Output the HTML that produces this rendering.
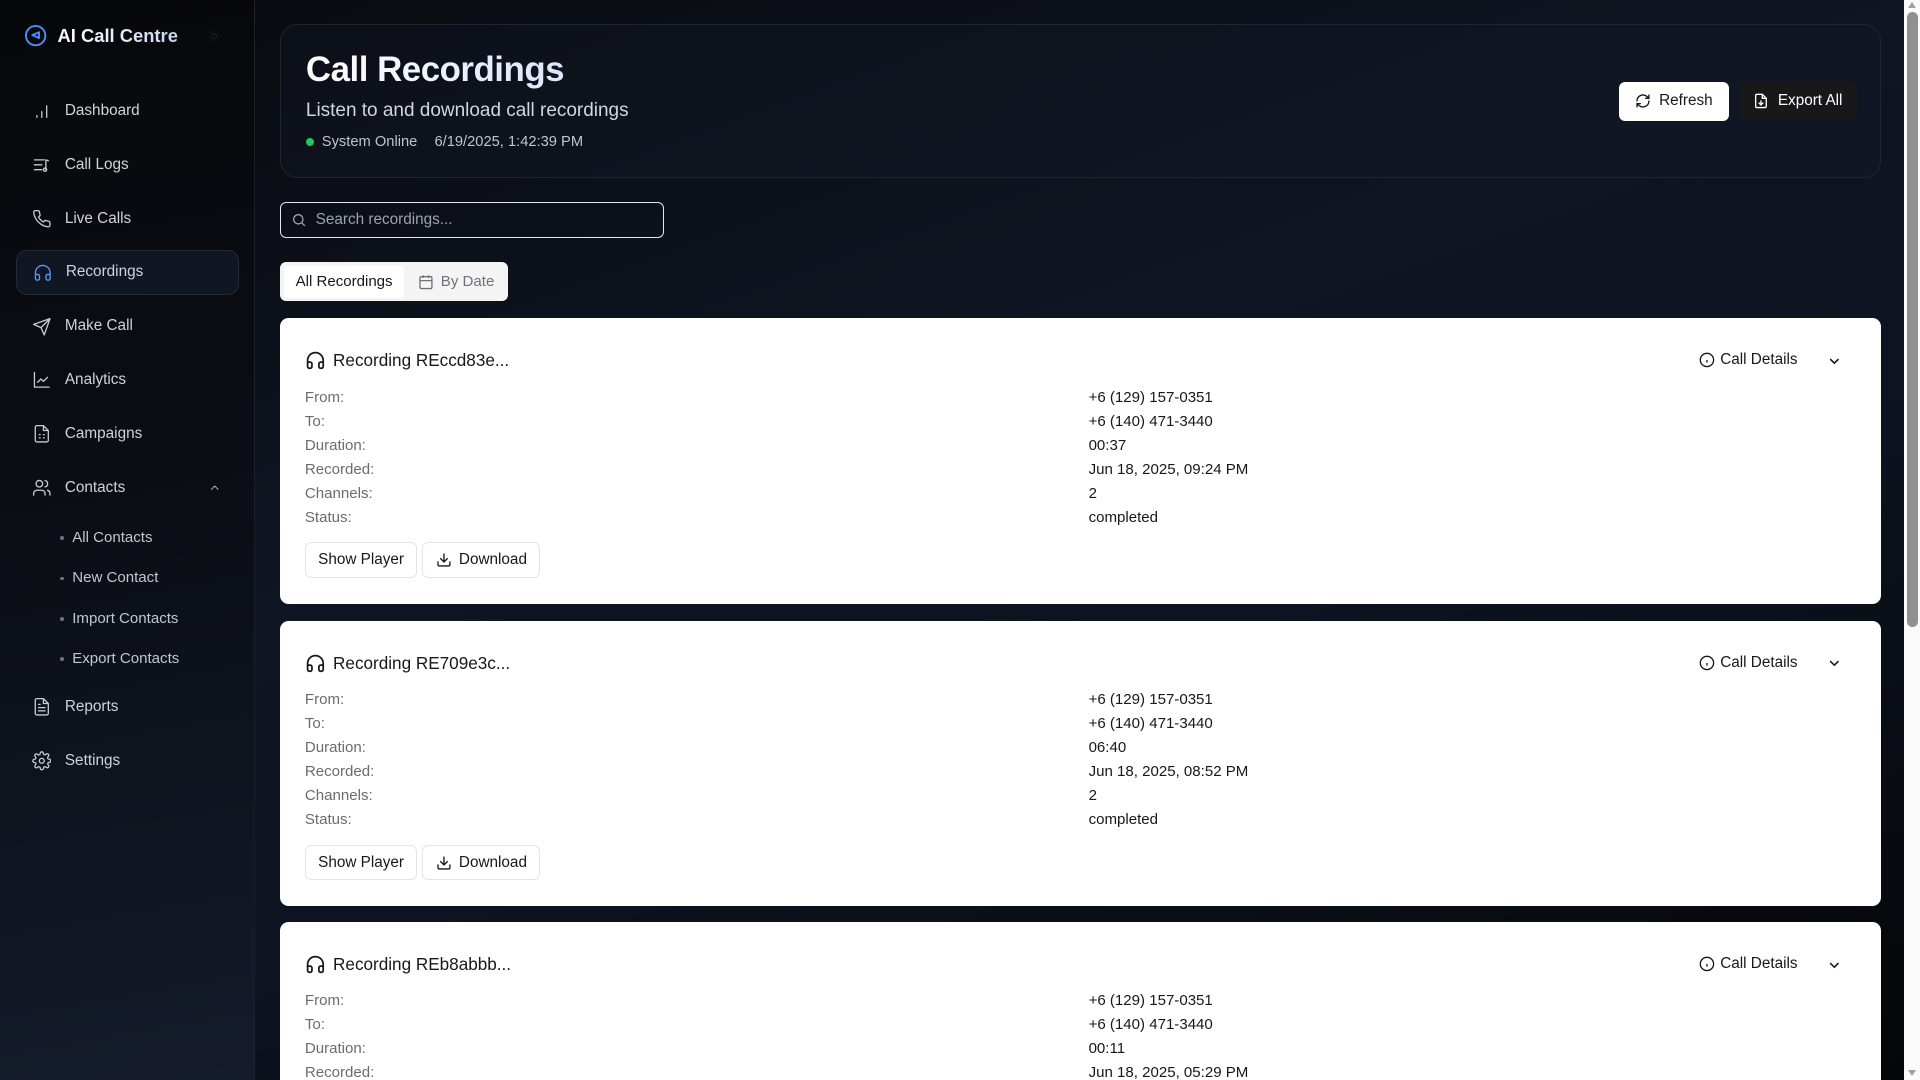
<!DOCTYPE html>
<html><head><meta charset="utf-8">
<style>
*{box-sizing:border-box;margin:0;padding:0}
html,body{width:1920px;height:1080px;overflow:hidden;background:#07080b}
#z{zoom:1.22449;width:1568px;height:882px;position:relative;overflow:hidden;font-family:"Liberation Sans",Arial,sans-serif;
background:linear-gradient(160deg,#08090d 0%,#0f1522 40%,#0d1320 60%,#050608 100%)}
.sb{position:absolute;left:0;top:0;width:208px;height:882px;border-right:1px solid #1c2029;
background:linear-gradient(170deg,#07080b 0%,#0b0e15 50%,#141b2b 100%)}
.logo{position:absolute;left:20px;top:20px;display:flex;align-items:center;gap:8px;color:#fff;font-weight:bold;font-size:15px;white-space:nowrap}
.logo span{background:linear-gradient(90deg,#fff,#c9d8f5);-webkit-background-clip:text;color:transparent}
.nav{position:absolute;left:13px;width:182px;height:37px;display:flex;align-items:center;padding-left:13px;gap:11px;color:#d0d3d9;font-size:12.5px;white-space:nowrap}
.nav svg{width:16px;height:16px;fill:none;stroke:#c8ccd3;stroke-width:1.6;stroke-linecap:round;stroke-linejoin:round}
.act{background:#111722;border:1px solid #232a38;border-radius:9px}
.act svg{stroke:#5b9cf0}
.sub{position:absolute;left:49px;color:#c2c6cd;font-size:12.3px}
.sub:before{content:"";display:inline-block;width:3px;height:3px;border-radius:50%;background:#6b7280;margin-right:7px;vertical-align:middle}
.hdr{position:absolute;left:229px;top:20px;width:1307px;height:125px;border:1px solid #1f2633;border-radius:14px;background:rgba(20,26,40,.35)}
h1{position:absolute;left:20px;top:20px;font-size:28.5px;white-space:nowrap;background:linear-gradient(90deg,#fff,#dde6fb);-webkit-background-clip:text;color:transparent;letter-spacing:-.4px}
.subt{position:absolute;left:20px;top:61px;color:#d2d6dd;font-size:15.5px;white-space:nowrap}
.meta{position:absolute;left:20px;top:89px;color:#c0c4cb;font-size:12px;white-space:nowrap}
.btn{position:absolute;top:46px;height:32px;border-radius:5px;display:flex;align-items:center;justify-content:center;gap:7px;font-size:12.5px;white-space:nowrap}
.search{position:absolute;left:229px;top:165px;width:313px;height:29px;border:1px solid #e5e7eb;border-radius:5px;color:#9ca3af;font-size:12.5px;display:flex;align-items:center;padding-left:8px;gap:7px}
.tabs{position:absolute;left:229px;top:214px;width:186px;height:32px;background:#f4f4f5;border-radius:5px}
.card{position:absolute;left:229px;width:1307px;height:233px;background:#fff;border-radius:7px}
.ct{position:absolute;left:20px;top:26px;display:flex;align-items:center;gap:6px;font-size:14px;color:#18181b;white-space:nowrap}
.rows{position:absolute;left:20px;top:55px;font-size:12.3px;line-height:19.6px;color:#6b6b72;width:1200px}
.rows div{position:relative}
.rows b{position:absolute;left:640px;font-weight:normal;color:#18181b}
.cd{position:absolute;right:68px;top:27px;display:flex;align-items:center;gap:4px;font-size:12.5px;color:#18181b;white-space:nowrap}
.chev{position:absolute;right:32px;top:29px}
.ob{position:absolute;top:183px;height:29px;border:1px solid #e4e4e7;border-radius:5px;font-size:12.5px;color:#18181b;display:flex;align-items:center;gap:6px;padding:0 10px;white-space:nowrap}
</style></head><body><div id="z">
<div class="sb">
 <div class="logo"><svg width="19" height="19" viewBox="0 0 24 24" fill="none" stroke="#4b8ff0" stroke-width="2"><circle cx="12" cy="12" r="10"/><path d="M15.5 8.5l-7 3 7 3z" stroke-linejoin="round"/></svg><span>AI Call Centre</span>
 <svg style="margin-left:16px" width="12" height="12" viewBox="0 0 24 24" fill="none" stroke="#1b1f27" stroke-width="2"><circle cx="12" cy="12" r="4"/><path d="M12 2v2M12 20v2M2 12h2M20 12h2M5 5l1.5 1.5M17.5 17.5L19 19M5 19l1.5-1.5M17.5 6.5L19 5"/></svg></div>
 <div class="nav" style="top:72px"><svg viewBox="0 0 24 24"><path d="M6 20v-2M12 20v-7M18 20V6"/></svg>Dashboard</div>
 <div class="nav" style="top:116px"><svg viewBox="0 0 24 24"><path d="M3 6h12M3 12h9M3 18h9M17 18V6l3 1"/><circle cx="16" cy="18" r="2"/></svg>Call Logs</div>
 <div class="nav" style="top:160px"><svg viewBox="0 0 24 24"><path d="M22 16.9v3a2 2 0 0 1-2.2 2 19.8 19.8 0 0 1-8.6-3.1 19.5 19.5 0 0 1-6-6A19.8 19.8 0 0 1 2.1 4.2 2 2 0 0 1 4.1 2h3a2 2 0 0 1 2 1.7c.1 1 .4 1.9.7 2.8a2 2 0 0 1-.5 2.1L8 9.9a16 16 0 0 0 6 6l1.3-1.3a2 2 0 0 1 2.1-.4c.9.3 1.8.6 2.8.7a2 2 0 0 1 1.7 2z"/></svg>Live Calls</div>
 <div class="nav act" style="top:204px"><svg viewBox="0 0 24 24"><path d="M3 14h3a2 2 0 0 1 2 2v3a2 2 0 0 1-2 2H5a2 2 0 0 1-2-2v-7a9 9 0 0 1 18 0v7a2 2 0 0 1-2 2h-1a2 2 0 0 1-2-2v-3a2 2 0 0 1 2-2h3"/></svg>Recordings</div>
 <div class="nav" style="top:248px"><svg viewBox="0 0 24 24"><path d="M22 2L11 13M22 2l-7 20-4-9-9-4z"/></svg>Make Call</div>
 <div class="nav" style="top:292px"><svg viewBox="0 0 24 24"><path d="M3 3v18h18M7 15l4-4 3 3 5-5"/></svg>Analytics</div>
 <div class="nav" style="top:336px"><svg viewBox="0 0 24 24"><path d="M14 2H6a2 2 0 0 0-2 2v16a2 2 0 0 0 2 2h12a2 2 0 0 0 2-2V8zM14 2v6h6M9 13h1M14 13h1M9 17h1M14 17h1"/></svg>Campaigns</div>
 <div class="nav" style="top:380px"><svg viewBox="0 0 24 24"><path d="M16 21v-2a4 4 0 0 0-4-4H6a4 4 0 0 0-4 4v2"/><circle cx="9" cy="7" r="4"/><path d="M22 21v-2a4 4 0 0 0-3-3.9M16 3.1a4 4 0 0 1 0 7.8"/></svg>Contacts
  <svg style="position:absolute;right:14px;width:11px;height:11px" viewBox="0 0 24 24"><path d="M6 15l6-6 6 6"/></svg></div>
 <div class="sub" style="top:432px">All Contacts</div>
 <div class="sub" style="top:465px">New Contact</div>
 <div class="sub" style="top:498px">Import Contacts</div>
 <div class="sub" style="top:531px">Export Contacts</div>
 <div class="nav" style="top:559px"><svg viewBox="0 0 24 24"><path d="M14 2H6a2 2 0 0 0-2 2v16a2 2 0 0 0 2 2h12a2 2 0 0 0 2-2V8zM14 2v6h6M16 13H8M16 17H8M10 9H8"/></svg>Reports</div>
 <div class="nav" style="top:603px"><svg viewBox="0 0 24 24"><circle cx="12" cy="12" r="3"/><path d="M19.4 15a1.7 1.7 0 0 0 .3 1.8l.1.1a2 2 0 1 1-2.8 2.8l-.1-.1a1.7 1.7 0 0 0-1.8-.3 1.7 1.7 0 0 0-1 1.5V21a2 2 0 1 1-4 0v-.1a1.7 1.7 0 0 0-1.1-1.5 1.7 1.7 0 0 0-1.8.3l-.1.1a2 2 0 1 1-2.8-2.8l.1-.1a1.7 1.7 0 0 0 .3-1.8 1.7 1.7 0 0 0-1.5-1H3a2 2 0 1 1 0-4h.1a1.7 1.7 0 0 0 1.5-1.1 1.7 1.7 0 0 0-.3-1.8l-.1-.1a2 2 0 1 1 2.8-2.8l.1.1a1.7 1.7 0 0 0 1.8.3H9a1.7 1.7 0 0 0 1-1.5V3a2 2 0 1 1 4 0v.1a1.7 1.7 0 0 0 1 1.5 1.7 1.7 0 0 0 1.8-.3l.1-.1a2 2 0 1 1 2.8 2.8l-.1.1a1.7 1.7 0 0 0-.3 1.8V9a1.7 1.7 0 0 0 1.5 1H21a2 2 0 1 1 0 4h-.1a1.7 1.7 0 0 0-1.5 1z"/></svg>Settings</div>
</div>

<div class="hdr">
 <h1>Call Recordings</h1>
 <div class="subt">Listen to and download call recordings</div>
 <div class="meta"><span style="display:inline-block;width:7px;height:7px;border-radius:50%;background:#22c55e;margin-right:6px"></span>System Online<span style="margin-left:14px">6/19/2025, 1:42:39 PM</span></div>
 <div class="btn" style="left:1092px;width:90px;background:#fff;color:#18181b"><svg width="13" height="13" viewBox="0 0 24 24" fill="none" stroke="#18181b" stroke-width="2" stroke-linecap="round"><path d="M3 12a9 9 0 0 1 15-6.7L21 8M21 3v5h-5M21 12a9 9 0 0 1-15 6.7L3 16M8 16H3v5"/></svg>Refresh</div>
 <div class="btn" style="left:1190px;width:97px;background:#18181b;color:#fff"><svg width="13" height="13" viewBox="0 0 24 24" fill="none" stroke="#fff" stroke-width="2" stroke-linecap="round"><path d="M14 2H6a2 2 0 0 0-2 2v16a2 2 0 0 0 2 2h12a2 2 0 0 0 2-2V8zM14 2v6h6M12 12v6M9 15l3 3 3-3"/></svg>Export All</div>
</div>

<div class="search"><svg width="13" height="13" viewBox="0 0 24 24" fill="none" stroke="#9ca3af" stroke-width="2"><circle cx="11" cy="11" r="7"/><path d="M21 21l-4.3-4.3"/></svg>Search recordings...</div>
<div class="tabs">
 <div style="position:absolute;left:3px;top:3px;width:98px;height:26px;background:#fff;border-radius:4px;font-size:12.3px;color:#18181b;text-align:center;line-height:26px">All Recordings</div>
 <div style="position:absolute;left:112px;top:3px;height:26px;line-height:26px;font-size:12.3px;color:#71717a;display:flex;align-items:center;gap:6px;white-space:nowrap"><svg width="13" height="13" viewBox="0 0 24 24" fill="none" stroke="#71717a" stroke-width="2"><rect x="3" y="4" width="18" height="18" rx="2"/><path d="M16 2v4M8 2v4M3 10h18"/></svg>By Date</div>
</div>

<div class="card" style="top:260px">
 <div class="ct"><svg width="17" height="17" viewBox="0 0 24 24" fill="none" stroke="#18181b" stroke-width="2" stroke-linecap="round"><path d="M3 14h3a2 2 0 0 1 2 2v3a2 2 0 0 1-2 2H5a2 2 0 0 1-2-2v-7a9 9 0 0 1 18 0v7a2 2 0 0 1-2 2h-1a2 2 0 0 1-2-2v-3a2 2 0 0 1 2-2h3"/></svg>Recording REccd83e...</div>
 <div class="cd"><svg width="13" height="13" viewBox="0 0 24 24" fill="none" stroke="#18181b" stroke-width="2"><circle cx="12" cy="12" r="10"/><path d="M12 16v-4M12 8h0"/></svg>Call Details</div>
 <svg class="chev" width="12" height="12" viewBox="0 0 24 24" fill="none" stroke="#18181b" stroke-width="2.6" stroke-linecap="round"><path d="M6 9l6 6 6-6"/></svg>
 <div class="rows"><div>From:<b>+6 (129) 157-0351</b></div><div>To:<b>+6 (140) 471-3440</b></div><div>Duration:<b>00:37</b></div><div>Recorded:<b>Jun 18, 2025, 09:24 PM</b></div><div>Channels:<b>2</b></div><div>Status:<b>completed</b></div></div>
 <div class="ob" style="left:20px">Show Player</div>
 <div class="ob" style="left:116px"><svg width="13" height="13" viewBox="0 0 24 24" fill="none" stroke="#18181b" stroke-width="2" stroke-linecap="round"><path d="M21 15v4a2 2 0 0 1-2 2H5a2 2 0 0 1-2-2v-4M7 10l5 5 5-5M12 15V3"/></svg>Download</div>
</div>
<div class="card" style="top:507px">
 <div class="ct"><svg width="17" height="17" viewBox="0 0 24 24" fill="none" stroke="#18181b" stroke-width="2" stroke-linecap="round"><path d="M3 14h3a2 2 0 0 1 2 2v3a2 2 0 0 1-2 2H5a2 2 0 0 1-2-2v-7a9 9 0 0 1 18 0v7a2 2 0 0 1-2 2h-1a2 2 0 0 1-2-2v-3a2 2 0 0 1 2-2h3"/></svg>Recording RE709e3c...</div>
 <div class="cd"><svg width="13" height="13" viewBox="0 0 24 24" fill="none" stroke="#18181b" stroke-width="2"><circle cx="12" cy="12" r="10"/><path d="M12 16v-4M12 8h0"/></svg>Call Details</div>
 <svg class="chev" width="12" height="12" viewBox="0 0 24 24" fill="none" stroke="#18181b" stroke-width="2.6" stroke-linecap="round"><path d="M6 9l6 6 6-6"/></svg>
 <div class="rows"><div>From:<b>+6 (129) 157-0351</b></div><div>To:<b>+6 (140) 471-3440</b></div><div>Duration:<b>06:40</b></div><div>Recorded:<b>Jun 18, 2025, 08:52 PM</b></div><div>Channels:<b>2</b></div><div>Status:<b>completed</b></div></div>
 <div class="ob" style="left:20px">Show Player</div>
 <div class="ob" style="left:116px"><svg width="13" height="13" viewBox="0 0 24 24" fill="none" stroke="#18181b" stroke-width="2" stroke-linecap="round"><path d="M21 15v4a2 2 0 0 1-2 2H5a2 2 0 0 1-2-2v-4M7 10l5 5 5-5M12 15V3"/></svg>Download</div>
</div>
<div class="card" style="top:753px">
 <div class="ct"><svg width="17" height="17" viewBox="0 0 24 24" fill="none" stroke="#18181b" stroke-width="2" stroke-linecap="round"><path d="M3 14h3a2 2 0 0 1 2 2v3a2 2 0 0 1-2 2H5a2 2 0 0 1-2-2v-7a9 9 0 0 1 18 0v7a2 2 0 0 1-2 2h-1a2 2 0 0 1-2-2v-3a2 2 0 0 1 2-2h3"/></svg>Recording REb8abbb...</div>
 <div class="cd"><svg width="13" height="13" viewBox="0 0 24 24" fill="none" stroke="#18181b" stroke-width="2"><circle cx="12" cy="12" r="10"/><path d="M12 16v-4M12 8h0"/></svg>Call Details</div>
 <svg class="chev" width="12" height="12" viewBox="0 0 24 24" fill="none" stroke="#18181b" stroke-width="2.6" stroke-linecap="round"><path d="M6 9l6 6 6-6"/></svg>
 <div class="rows"><div>From:<b>+6 (129) 157-0351</b></div><div>To:<b>+6 (140) 471-3440</b></div><div>Duration:<b>00:11</b></div><div>Recorded:<b>Jun 18, 2025, 05:29 PM</b></div></div>
</div>

<div style="position:absolute;left:1555px;top:0;width:13px;height:882px;background:#fafafa"></div>
<div style="position:absolute;left:1557px;top:10px;width:9px;height:502px;background:#909090;border-radius:5px"></div>
<div style="position:absolute;left:1558px;top:2px;width:0;height:0;border-left:4px solid transparent;border-right:4px solid transparent;border-bottom:5px solid #a0a0a0"></div>
<div style="position:absolute;left:1558px;top:874px;width:0;height:0;border-left:4px solid transparent;border-right:4px solid transparent;border-top:5px solid #a0a0a0"></div>
</div></body></html>
